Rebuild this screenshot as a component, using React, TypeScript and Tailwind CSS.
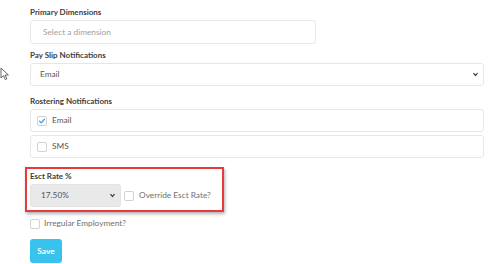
import React from "react";

function Chevron({ className }: { className?: string }) {
  return (
    <svg viewBox="0 0 10 10" className={className} fill="none" stroke="#444" strokeWidth="1.8" strokeLinecap="round" strokeLinejoin="round">
      <path d="M2.5 3.5 L5 6.5 L7.5 3.5" />
    </svg>
  );
}

function Box({ checked }: { checked?: boolean }) {
  return (
    <span className="w-[10px] h-[10px] rounded-[2px] border border-[#d2d2d2] bg-white flex items-center justify-center shrink-0">
      {checked && (
        <svg viewBox="0 0 10 10" className="w-[8px] h-[8px]" fill="none" stroke="#2fa8e6" strokeWidth="1.6" strokeLinecap="round" strokeLinejoin="round">
          <path d="M2 5.3 L4.2 7.3 L8 2.8" />
        </svg>
      )}
    </span>
  );
}

export default function App() {
  return (
    <div className="relative w-[498px] h-[264px] bg-white overflow-hidden text-[8.3px] text-[#555]" style={{ fontFamily: "Lato, 'Liberation Sans', sans-serif" }}>
      {/* mouse pointer */}
      <svg viewBox="0 0 10 14" className="absolute left-[0px] top-[67px] w-[10px] h-[14px]" fill="white" stroke="#555" strokeWidth="0.9">
        <path d="M1 1 L1 11 L3.5 8.6 L5.3 12.6 L6.8 11.9 L5.1 8 L8.4 8 Z" />
      </svg>

      <div className="pl-[30px] pr-[14px] pt-[6px]">
        <div className="h-[12px] leading-[12px] text-[8px] font-bold text-[#3d3d3d]">Primary Dimensions</div>
        <div className="mt-[2px] w-[286px] h-[24px] rounded-[3px] border border-[#e6e8e8] flex items-center pl-[12px] text-[#a0a0a0]">
          Select a dimension
        </div>

        <div className="mt-[5px] h-[12px] leading-[12px] text-[8px] font-bold text-[#3d3d3d]">Pay Slip Notifications</div>
        <div className="mt-[2px] h-[23px] rounded-[3px] border border-[#e6e8e8] flex items-center justify-between pl-[9px] pr-[4px] text-[#555]">
          <span>Email</span>
          <Chevron className="w-[7px] h-[7px]" />
        </div>

        <div className="mt-[9px] h-[12px] leading-[12px] text-[8px] font-bold text-[#3d3d3d]">Rostering Notifications</div>
        <div className="mt-[2px] flex flex-col gap-[3px]">
          <div className="h-[23px] rounded-[3px] border border-[#e6e8e8] flex items-center gap-[5px] pl-[6px] text-[#555]">
            <Box checked />
            <span>Email</span>
          </div>
          <div className="h-[23px] rounded-[3px] border border-[#e6e8e8] flex items-center gap-[5px] pl-[6px] text-[#555]">
            <Box />
            <span>SMS</span>
          </div>
        </div>

        <div className="mt-[9px] -ml-[5px] w-[199px] border-2 border-[#e8393d] shadow-[1px_2px_3px_rgba(0,0,0,0.3)] pl-[3px] pt-[1px] pb-[3px]">
          <div className="h-[12px] leading-[12px] text-[8px] font-bold text-[#3d3d3d]">Esct Rate %</div>
          <div className="mt-[2px] flex items-center gap-[3px]">
            <div className="w-[91px] h-[23px] rounded-[3px] bg-[#e9e9e9] border border-[#e3e3e3] flex items-center justify-between pl-[10px] pr-[4px] text-[#555]">
              <span>17.50%</span>
              <Chevron className="w-[7px] h-[7px]" />
            </div>
            <Box />
            <span className="ml-[2px] text-[#707070]">Override Esct Rate?</span>
          </div>
        </div>

        <div className="mt-[5px] h-[13px] flex items-center gap-[4px] text-[#707070]">
          <Box />
          <span>Irregular Employment?</span>
        </div>

        <button className="mt-[9px] w-[32px] h-[24px] rounded-[3px] bg-[#38c3ee] text-white font-bold text-[8.3px] flex items-center justify-center">
          Save
        </button>
      </div>
    </div>
  );
}
